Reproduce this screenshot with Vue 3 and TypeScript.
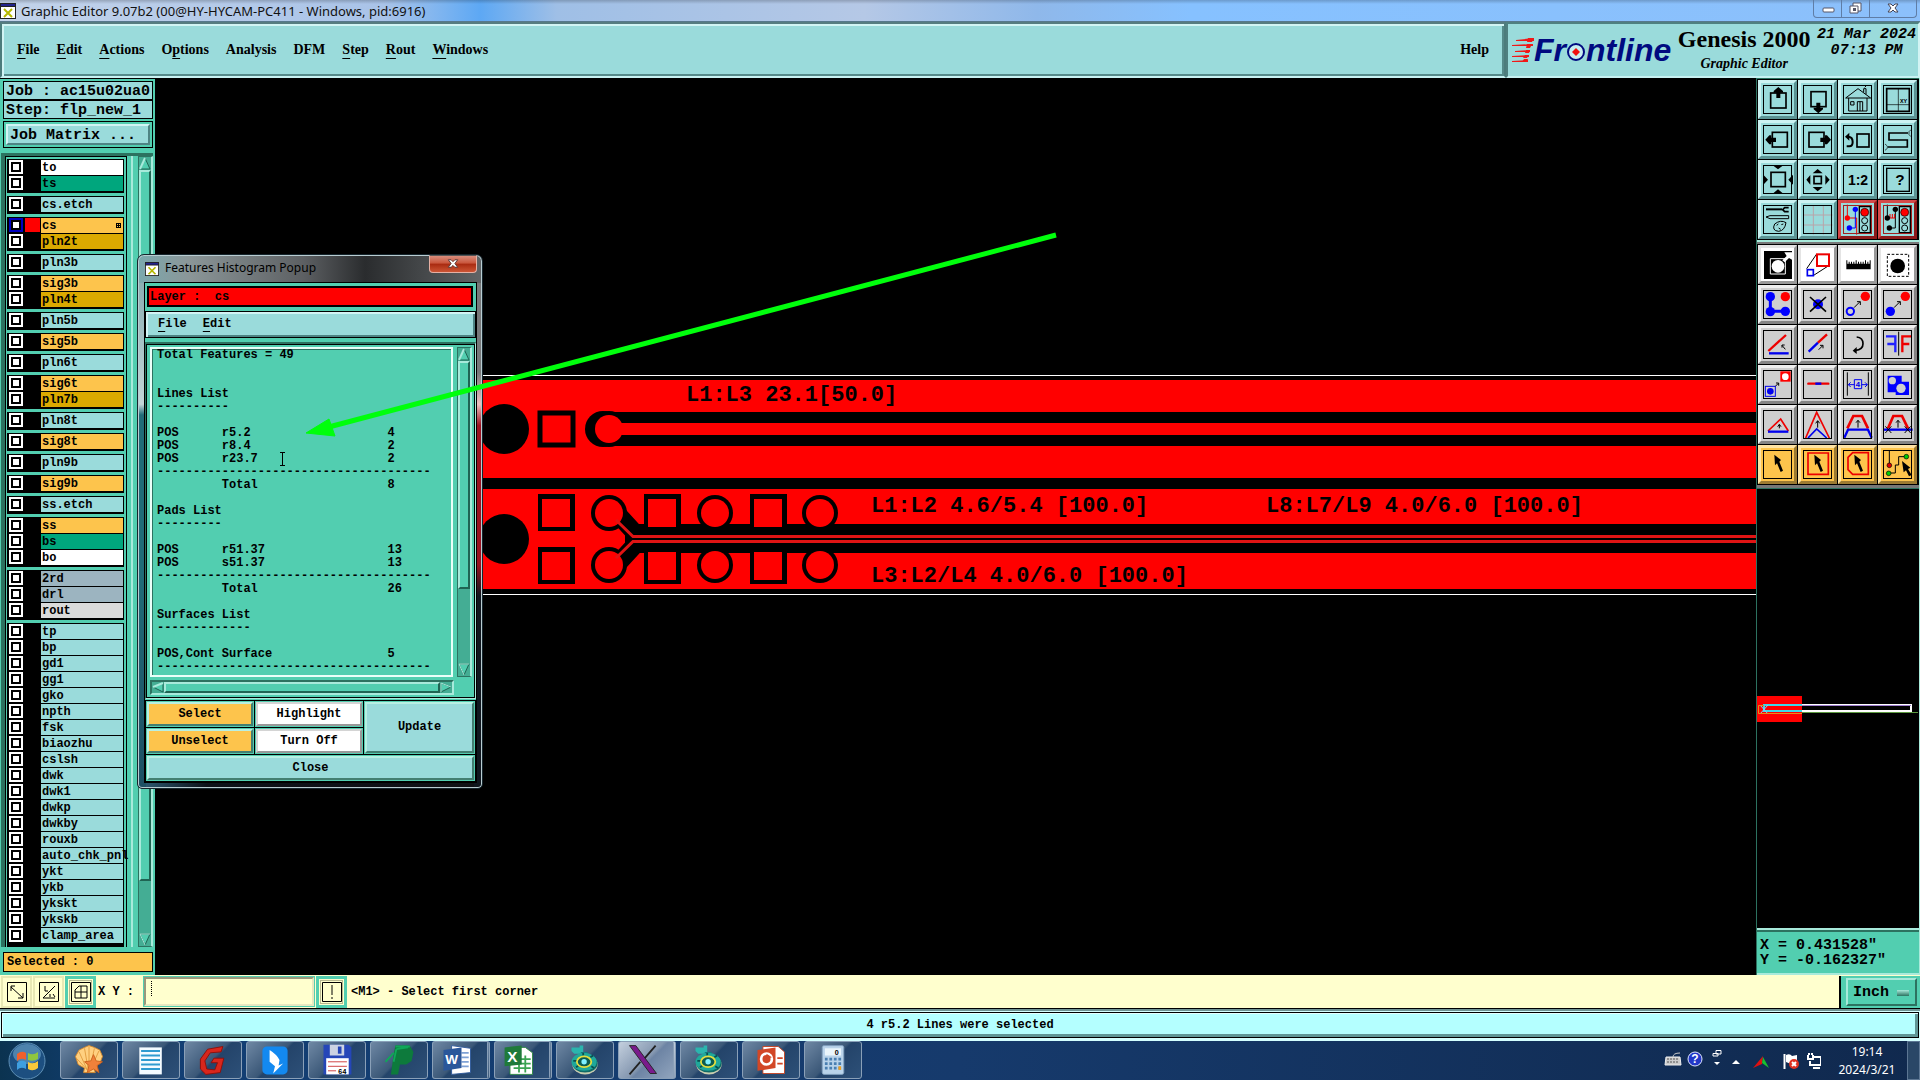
<script setup lang="ts">
interface Layer { name: string; tone: string; active?: boolean }
interface Tool { label: string; tone: string; art: string }
interface Launcher { label: string; art: string; active?: boolean; stacked?: boolean }

const menus: { label: string; key: number }[] = [
  { label: 'File', key: 0 },
  { label: 'Edit', key: 0 },
  { label: 'Actions', key: 0 },
  { label: 'Options', key: 1 },
  { label: 'Analysis', key: -1 },
  { label: 'DFM', key: -1 },
  { label: 'Step', key: 0 },
  { label: 'Rout', key: 0 },
  { label: 'Windows', key: 0 },
]

const misc = (names: string): Layer[] => names.split(' ').map((name) => ({ name, tone: 'aqua' }))

const layerGroups: Layer[][] = [
  [{ name: 'to', tone: 'white' }, { name: 'ts', tone: 'green' }],
  [{ name: 'cs.etch', tone: 'aqua' }],
  [{ name: 'cs', tone: 'amber', active: true }, { name: 'pln2t', tone: 'gold' }],
  [{ name: 'pln3b', tone: 'aqua' }],
  [{ name: 'sig3b', tone: 'amber' }, { name: 'pln4t', tone: 'gold' }],
  [{ name: 'pln5b', tone: 'aqua' }],
  [{ name: 'sig5b', tone: 'amber' }],
  [{ name: 'pln6t', tone: 'aqua' }],
  [{ name: 'sig6t', tone: 'amber' }, { name: 'pln7b', tone: 'gold' }],
  [{ name: 'pln8t', tone: 'aqua' }],
  [{ name: 'sig8t', tone: 'amber' }],
  [{ name: 'pln9b', tone: 'aqua' }],
  [{ name: 'sig9b', tone: 'amber' }],
  [{ name: 'ss.etch', tone: 'aqua' }],
  [{ name: 'ss', tone: 'amber' }, { name: 'bs', tone: 'green' }, { name: 'bo', tone: 'white' }],
  [{ name: '2rd', tone: 'slate' }, { name: 'drl', tone: 'slate' }, { name: 'rout', tone: 'silver' }],
  misc('tp bp gd1 gg1 gko npth fsk biaozhu cslsh dwk dwk1 dwkp dwkby rouxb auto_chk_pnl ykt ykb ykskt ykskb clamp_area'),
]

const rule = '-'.repeat(38)
const row = (kind: string, symbol: string, count: string): string => kind.padEnd(9) + symbol.padEnd(23) + count
const report: string[] = [
  'Total Features = 49',
  '',
  '',
  'Lines List',
  '-'.repeat(10),
  '',
  row('POS', 'r5.2', '4'),
  row('POS', 'r8.4', '2'),
  row('POS', 'r23.7', '2'),
  rule,
  row('', 'Total', '8'),
  '',
  'Pads List',
  '-'.repeat(9),
  '',
  row('POS', 'r51.37', '13'),
  row('POS', 's51.37', '13'),
  rule,
  row('', 'Total', '26'),
  '',
  'Surfaces List',
  '-'.repeat(13),
  '',
  row('POS,Cont', 'Surface', '5'),
  rule,
]

const pointer = '<path d="M49 29 69 45 64 50 75 77 68 81 57 55 51 61Z"/>'
const smallUp = '<path d="M60 68V46M54 53L60 46 66 53" fill="none" stroke="#000" stroke-width="3"/>'
const smallDiag = '<path d="M48 68L66 50M57 50H67V60" fill="none" stroke="#000" stroke-width="3"/>'

const viewTools: Tool[] = [
  { label: 'Pan up', tone: 'aqua', art: '<rect x="38" y="39" width="46" height="45" fill="none" stroke="#000" stroke-width="5"/><path d="M61 21 75 33V38H67V54H55V38H47V33Z"/>' },
  { label: 'Pan down', tone: 'aqua', art: '<rect x="39" y="35" width="45" height="45" fill="none" stroke="#000" stroke-width="5"/><path d="M61 100 75 88V83H67V68H55V83H47V88Z"/>' },
  { label: 'Home', tone: 'aqua', art: '<path d="M23 54 60 26 98 54ZM32 54V93H87V54M58 93V65H74V93M66 65V93M38 65H48V75H38ZM77 37V26H84V43M80 22L84 18" fill="none" stroke="#000" stroke-width="3"/>' },
  { label: 'Zoom XY', tone: 'aqua', art: '<path d="M26 26H94V94H26Z" fill="none" stroke="#000" stroke-width="5"/><path d="M61 26V94M26 74H94" stroke="#000" stroke-width="2"/><text x="66" y="68" font-size="18" font-weight="bold" font-family="Liberation Mono, monospace">XY</text>' },
  { label: 'Pan left', tone: 'aqua', art: '<rect x="43" y="37" width="45" height="44" fill="none" stroke="#000" stroke-width="5"/><path d="M22 59 34 46H40V53H54V66H40V73H34Z"/>' },
  { label: 'Pan right', tone: 'aqua', art: '<rect x="33" y="37" width="45" height="44" fill="none" stroke="#000" stroke-width="5"/><path d="M99 59 87 46H81V53H67V66H81V73H87Z"/>' },
  { label: 'Previous view', tone: 'aqua', art: '<rect x="57" y="42" width="36" height="39" fill="none" stroke="#000" stroke-width="5"/><path d="M26 79H34Q44 79 44 66 44 50 30 50" fill="none" stroke="#000" stroke-width="6"/><path d="M21 50 34 38V62Z"/>' },
  { label: 'Snake view', tone: 'aqua', art: '<path d="M90 39H33V60H88V81H30" fill="none" stroke="#000" stroke-width="5"/><path d="M99 29 93 35V44L99 50M21 72 28 78V85L21 91" fill="none" stroke="#000" stroke-width="2"/>' },
  { label: 'Zoom out', tone: 'aqua', art: '<rect x="39" y="37" width="43" height="43" fill="none" stroke="#000" stroke-width="5"/><path d="M44 16H76L60 28ZM44 101H76L60 88ZM16 44V74L30 59ZM105 44V74L91 59Z"/>' },
  { label: 'Zoom in', tone: 'aqua', art: '<rect x="48" y="49" width="22" height="22" fill="none" stroke="#000" stroke-width="5"/><path d="M44 40H74L59 27ZM44 81H74L59 94ZM37 45V74L25 59ZM82 45V74L95 59Z"/>' },
  { label: 'Scale', tone: 'aqua', art: '<text x="60" y="74" font-size="42" font-weight="bold" text-anchor="middle" font-family="Liberation Sans, sans-serif">1:2</text>' },
  { label: 'Help', tone: 'aqua', art: '<rect x="26" y="25" width="68" height="69" fill="none" stroke="#000" stroke-width="4"/><text x="66" y="76" font-size="46" text-anchor="middle" font-weight="bold" font-family="Liberation Sans, sans-serif">?</text>' },
  { label: 'Parameters', tone: 'aqua', art: '<path d="M24 28H72" stroke="#000" stroke-width="6"/><path d="M92 23H80L74 29 80 35H92" fill="none" stroke="#000" stroke-width="5"/><path d="M24 51 36 47H92V56H36ZM50 72Q68 58 84 68 80 92 62 94 40 92 50 72ZM56 76l5-4M70 74l6-2M62 84l6 4" fill="none" stroke="#000" stroke-width="3"/>' },
  { label: 'Grid', tone: 'aqua', art: '<path d="M46 15V104M76 15V104M15 45H104M15 75H104" stroke="#b9a4a9" stroke-width="3"/>' },
  { label: 'Net highlight', tone: 'red', art: '<path d="M28 14V54H56V104" fill="none" stroke="#e00" stroke-width="3"/><path d="M52 28V84H34" fill="none" stroke="#00f" stroke-width="3"/><circle cx="28" cy="54" r="8" fill="#f00"/><circle cx="52" cy="28" r="8" fill="#00f"/><circle cx="34" cy="84" r="8" fill="#00f"/><path d="M64 20H97V98H64Z" fill="#9adbdb" stroke="#000" stroke-width="4"/><circle cx="80" cy="37" r="12" fill="#f00" stroke="#000" stroke-width="2"/><circle cx="80" cy="62" r="9" fill="none" stroke="#000" stroke-width="3"/><circle cx="80" cy="84" r="9" fill="none" stroke="#000" stroke-width="3"/>' },
  { label: 'Net check', tone: 'red', art: '<path d="M28 14V54M52 28V84H34" fill="none" stroke="#000" stroke-width="3"/><path d="M30 54H52M36 54V42M43 54V42M50 54V42" stroke="#e00" stroke-width="3"/><circle cx="28" cy="54" r="8"/><circle cx="52" cy="28" r="8"/><circle cx="34" cy="84" r="8"/><path d="M64 20H97V98H64Z" fill="#9adbdb" stroke="#000" stroke-width="4"/><circle cx="80" cy="37" r="12" fill="#f00" stroke="#000" stroke-width="2"/><circle cx="80" cy="62" r="9" fill="none" stroke="#000" stroke-width="3"/><circle cx="80" cy="84" r="9" fill="none" stroke="#000" stroke-width="3"/>' },
]

const editTools: Tool[] = [
  { label: 'Feature info', tone: 'white', art: '<path d="M18 18H102V102H18Z"/><path d="M37 41H82V87H37Z" fill="none" stroke="#fff" stroke-width="3"/><circle cx="60" cy="64" r="19" fill="#fff"/><path d="M73 46 86 33 79 22H102V44L93 39 80 52Z" fill="#fff"/>' },
  { label: 'Copy outline', tone: 'white', art: '<path d="M26 71 56 27M47 91 92 62" stroke="#000" stroke-width="3"/><rect x="57" y="28" width="36" height="35" fill="none" stroke="#e00" stroke-width="6"/><rect x="28" y="74" width="18" height="18" fill="none" stroke="#00e" stroke-width="5"/>' },
  { label: 'Measure', tone: 'white', art: '<path d="M25 73V46H28V56H32V50H35V56H39V50H42V56H46V50H49V56H53V46H56V56H60V50H63V56H67V50H70V56H74V50H77V56H81V46H84V56H88V50H91V56H95V46H98V73Z"/>' },
  { label: 'Select area', tone: 'white', art: '<rect x="28" y="28" width="64" height="66" fill="none" stroke="#000" stroke-width="3" stroke-dasharray="8 5"/><circle cx="59" cy="63" r="22"/>' },
  { label: 'Add feature', tone: 'grey', art: '<path d="M37 35V79H82" fill="none" stroke="#00f" stroke-width="9"/><g fill="#00f"><circle cx="37" cy="35" r="14"/><circle cx="37" cy="80" r="14"/><circle cx="82" cy="79" r="14"/></g><circle cx="82" cy="35" r="14" fill="#f00"/>' },
  { label: 'Delete feature', tone: 'grey', art: '<circle cx="60" cy="58" r="15" fill="#00f"/><path d="M36 36 84 80M84 36 36 80" stroke="#000" stroke-width="5"/>' },
  { label: 'Move feature', tone: 'grey', art: `<circle cx="82" cy="34" r="14" fill="#f00"/><circle cx="37" cy="79" r="11" fill="none" stroke="#00f" stroke-width="6"/>${smallDiag}` },
  { label: 'Copy feature', tone: 'grey', art: `<circle cx="82" cy="34" r="14" fill="#f00"/><circle cx="37" cy="79" r="14" fill="#00f"/>${smallDiag}` },
  { label: 'Rotate', tone: 'grey', art: '<path d="M31 78 84 30" stroke="#e00" stroke-width="7"/><path d="M33 85H92" stroke="#00e" stroke-width="7"/><path d="M82 73 72 61M72 68V60H80" fill="none" stroke="#000" stroke-width="3"/>' },
  { label: 'Stretch', tone: 'grey', art: '<path d="M32 80 60 53" stroke="#00e" stroke-width="7"/><path d="M60 53 87 28" stroke="#e00" stroke-width="7"/><path d="M62 74 74 62M66 61H75V70" fill="none" stroke="#000" stroke-width="3"/>' },
  { label: 'Rotate free', tone: 'grey', art: '<path d="M56 36Q75 38 75 56 75 74 52 76" fill="none" stroke="#000" stroke-width="5"/><path d="M44 77 56 66V87Z"/>' },
  { label: 'Mirror', tone: 'grey', art: '<path d="M24 34H52V82M28 57H52" fill="none" stroke="#22f" stroke-width="7"/><path d="M99 34H73V82M94 57H73" fill="none" stroke="#e00" stroke-width="7"/><path d="M62 20V92" stroke="#000" stroke-width="3"/>' },
  { label: 'Substitute', tone: 'grey', art: '<rect x="22" y="64" width="30" height="30" fill="none" stroke="#00e" stroke-width="3"/><circle cx="37" cy="79" r="10" fill="#00e"/><path d="M67 19H98V50H67Z" fill="#f00"/><circle cx="82" cy="35" r="10" fill="#fff"/><path d="M52 64 61 55M54 54H62V62" fill="none" stroke="#000" stroke-width="3"/>' },
  { label: 'Break line', tone: 'grey', art: '<path d="M31 56H91" stroke="#e00" stroke-width="7" stroke-linecap="round"/><path d="M52 56H70" stroke="#00e" stroke-width="7"/>' },
  { label: 'Set spacing', tone: 'grey', art: '<path d="M28 22V92M91 22V92" stroke="#000" stroke-width="3"/><path d="M31 59H49M38 52 31 59 38 66M88 59H71M81 52 88 59 81 66M49 44H71V71H49Z" fill="none" stroke="#00e" stroke-width="3"/><text x="60" y="67" font-size="24" fill="#00e" text-anchor="middle" font-family="Liberation Mono, monospace">4</text>' },
  { label: 'Union', tone: 'grey', art: '<path d="M29 32H71V50H93V90H53V82H29Z" fill="#00f"/><circle cx="43" cy="47" r="11" fill="#cfcfcf"/><circle cx="69" cy="70" r="14" fill="#cfcfcf"/>' },
  { label: 'Corner', tone: 'grey', art: `<path d="M30 78 68 42 91 78" fill="none" stroke="#e00" stroke-width="5"/><path d="M30 80H91" stroke="#00e" stroke-width="7"/><path d="M64 70V59M59 65L64 58 69 65" fill="none" stroke="#000" stroke-width="3"/>` },
  { label: 'Spike', tone: 'grey', art: `<path d="M23 99 56 22 94 99" fill="none" stroke="#e00" stroke-width="5"/><path d="M30 99 56 72 86 99" fill="none" stroke="#00e" stroke-width="5"/><path d="M59 68V48M53 55L59 47 65 55" fill="none" stroke="#000" stroke-width="3"/>` },
  { label: 'Trapezoid', tone: 'grey', art: `<path d="M28 70 46 33H72L90 70" fill="none" stroke="#e00" stroke-width="8"/><path d="M19 98 30 74H90L101 98" fill="none" stroke="#00e" stroke-width="7"/>${smallUp}` },
  { label: 'Trapezoid cut', tone: 'grey', art: `<path d="M30 70 46 33H72L90 70" fill="none" stroke="#e00" stroke-width="8"/><path d="M16 74H104" stroke="#00e" stroke-width="7"/><path d="M22 64 40 84M40 64 22 84M80 64 98 84M98 64 80 84" stroke="#000" stroke-width="3"/>${smallUp}` },
  { label: 'Select single', tone: 'amber', art: pointer },
  { label: 'Select rectangle', tone: 'amber', art: `<path d="M30 24H91V88H30Z" fill="none" stroke="#e00" stroke-width="5"/>${pointer}` },
  { label: 'Select polygon', tone: 'amber', art: `<path d="M44 23H91V88H44L30 74V37Z" fill="none" stroke="#e00" stroke-width="5"/>${pointer}` },
  { label: 'Select net', tone: 'amber', art: '<path d="M34 18V60M34 84H52V60H62V35H84" fill="none" stroke="#000" stroke-width="3"/><circle cx="34" cy="61" r="7" fill="#d00" stroke="#000" stroke-width="2"/><circle cx="85" cy="35" r="7" fill="#0c0" stroke="#000" stroke-width="2"/><circle cx="32" cy="85" r="7" fill="#0c0" stroke="#000" stroke-width="2"/><path d="M72 48 97 68 90 72 101 90 93 94 84 76 77 82Z"/>' },
]

const disc = '<path d="M5 6H14V4H18V13H8L5 10Z" fill="#2bb5ae"/><path d="M15 11H23V15H17Z" fill="#157a80"/><ellipse cx="20" cy="25" rx="14" ry="11" fill="#c9cdb0"/><ellipse cx="20" cy="24" rx="14" ry="10" fill="#0f6a66"/><ellipse cx="19" cy="22" rx="14" ry="10" fill="#1fa89a"/><path d="M7 21H11M26 17 29 15M27 27 30 29M10 28 13 26M18 12V15" stroke="#0a4f50" stroke-width="2"/><ellipse cx="19" cy="22" rx="8" ry="6" fill="#0b5c50" stroke="#e6dd3e" stroke-width="2"/><circle cx="19" cy="22" r="3" fill="#7ff0ff"/>'

const launchers: Launcher[] = [
  { label: 'Shell', art: '<path d="M20 34H14L15 29 8 25 5 16 9 9 15 6 20 4 26 6 32 9 35 16 32 24 25 29 27 34Z" fill="#ffd080" stroke="#d98a2b"/><path d="M18 31 9 11M19 30 15 7M20 30 20 5M21 30 26 7M18 31 6 18M22 30 31 10" stroke="#e09a3c" fill="none"/><path d="M25 14 28 21 35 22 29 26 31 34 25 30 18 34 20 26 15 22 22 21Z" fill="#f0813a" stroke="#c9601c"/>' },
  { label: 'Notes', art: '<rect x="7" y="6" width="25" height="30" fill="#f4fbff"/><path d="M9 10H30M9 15H30M9 20H30M9 25H30M9 30H30" stroke="#2f9bd0" stroke-width="2"/>' },
  { label: 'Genesis', art: '<path d="M31 5 29 11 17 12 11 21 13 30 22 31 25 23H18L21 18H32L28 34 12 36 6 30 6 19 14 8Z" fill="#d8261c" stroke="#8e0d08"/>' },
  { label: 'Messenger', art: '<rect x="6" y="5" width="28" height="31" rx="5" fill="#1389f0"/><path d="M14 9Q22 14 25 20L24 26 29 24 18 35 20 27 14 22Z" fill="#fff"/>' },
  { label: 'Disk', art: '<path d="M5 3H33L36 6V36H5Z" fill="#2546b8"/><rect x="12" y="3" width="16" height="12" fill="#ccd3e2"/><rect x="21" y="5" width="4" height="8" fill="#2546b8"/><rect x="8" y="18" width="25" height="18" fill="#fff"/><path d="M10 22H31M10 27H31M10 32H19" stroke="#c33"/><text x="21" y="35" font-size="8" font-family="Liberation Mono, monospace">64</text>' },
  { label: 'Player', art: '<path d="M16 4H32L36 11 34 21 28 25H21L19 36H11L14 14Z" fill="#0d7a3c"/><path d="M16 5H32M17 8 14 22M17 8 30 6M5 22 14 12" stroke="#0fa858" fill="none" stroke-width="2"/>' },
  { label: 'Word', stacked: true, art: '<path d="M14 4 35 7V34L14 36Z" fill="#fff" stroke="#2b579a"/><path d="M25 12H33M25 17H33M25 22H33M25 27H33" stroke="#7fa2d6" stroke-width="2"/><path d="M5 9 25 6V29L5 32Z" fill="#2b579a"/><text x="7" y="24" font-size="15" font-weight="bold" fill="#fff" font-family="Liberation Sans, sans-serif">W</text>' },
  { label: 'Excel', stacked: true, art: '<path d="M10 6H27L35 12V36H10Z" fill="#fff" stroke="#2b8a3e"/><path d="M14 19H33M14 24H33M14 29H33M20 15V34M27 15V34" stroke="#3aa352" stroke-width="2"/><path d="M4 6 23 4V25L4 27Z" fill="#1f7a3a"/><text x="7" y="22" font-size="17" font-weight="bold" fill="#fff" font-family="Liberation Sans, sans-serif">X</text>' },
  { label: 'Disc tool', art: disc },
  { label: 'X server', active: true, stacked: true, art: '<path d="M5 4H12L35 35H28Z" fill="#7a1b8c" stroke="#222"/><path d="M34 4 22 18M17 22 5 36" stroke="#222" stroke-width="2"/>' },
  { label: 'Disc tool 2', art: disc },
  { label: 'PowerPoint', art: '<path d="M11 5H28L35 11V35H11Z" fill="#fff" stroke="#c8421f"/><path d="M5 9 25 6V29L5 32Z" fill="#d24726"/><circle cx="15" cy="19" r="6" fill="none" stroke="#fff" stroke-width="3"/><path d="M15 19V13L21 17Z" fill="#d24726"/><path d="M27 18H33M27 24H33" stroke="#d24726" stroke-width="2"/>' },
  { label: 'Calculator', art: '<rect x="8" y="4" width="24" height="32" rx="2" fill="#b9d3ea" stroke="#7d9cba"/><rect x="11" y="7" width="18" height="8" fill="#eaf5fb"/><text x="22" y="14" font-size="8" font-family="Liberation Sans, sans-serif">0</text><path d="M11 19H29M11 24H29M11 29H29" stroke="#4a7fb0" stroke-width="3" stroke-dasharray="3 2"/><path d="M26 29H29" stroke="#f0a020" stroke-width="4"/>' },
]

// Square and round test pads along the differential pair coupon.
const squareX = [538, 644, 750]
const roundX = [609, 715, 820]
const padRows = [494, 547]
</script>

<template>
  <div class="screen">
    <header class="title-bar">
      <svg class="app-icon" viewBox="0 0 16 16"><path d="M0 0H16V16H0Z" fill="#222" /><path d="M1 4H15V15H1Z" fill="#fff" /><path d="M1 1H15V3H1Z" fill="#23238c" /><path d="M4 6 12 14M12 6 4 14" stroke="#b5b800" stroke-width="2" /></svg>
      <h1>Graphic Editor 9.07b2 (00@HY-HYCAM-PC411 - Windows, pid:6916)</h1>
      <div class="caption-buttons">
        <button type="button" aria-label="Minimize"><svg viewBox="0 0 28 17"><rect x="9" y="8" width="11" height="4" rx="1" fill="#fff" stroke="#556" /></svg></button>
        <button type="button" aria-label="Restore"><svg viewBox="0 0 28 17"><path d="M11 3H19V11H11Z" fill="#fff" stroke="#556" /><path d="M8 6H16V13H8Z" fill="#fff" stroke="#556" /><path d="M11 8H14V11H11Z" fill="#556" /></svg></button>
        <button type="button" class="wide" aria-label="Close"><svg viewBox="0 0 28 17"><path d="M9 4H12L14 6 16 4H19L16 8 19 12H16L14 10 12 12H9L12 8Z" fill="#fff" stroke="#445" /></svg></button>
      </div>
    </header>

    <div class="top">
      <nav class="menu-bar">
        <button v-for="m in menus" :key="m.label" type="button"><template v-if="m.key >= 0">{{ m.label.slice(0, m.key) }}<u>{{ m.label[m.key] }}</u>{{ m.label.slice(m.key + 1) }}</template><template v-else>{{ m.label }}</template></button>
        <button type="button" class="help">Help</button>
      </nav>
      <section class="brand">
        <div class="logo">
          <svg class="speed" viewBox="0 0 22 24"><path d="M4 2 22 0V3L4 3ZM0 7 21 6V8H0ZM3 13 18 12V14H3ZM0 18 17 17V19H0ZM0 23 16 22V24H0Z" fill="#f01818" /><path d="M16 0H22L20 4H15ZM15 6H20L18 10H14ZM14 12H18L17 15H13ZM13 17H17L15 20H11ZM12 21H16L15 24H10Z" fill="#f01818" /></svg>
          <span>Fr</span>
          <svg class="target" viewBox="0 0 20 20"><circle cx="10" cy="10" r="8" fill="#c8eef0" stroke="#000a80" stroke-width="2" /><path d="M10 6 14 10 10 14 6 10Z" fill="#f01010" /></svg>
          <span>ntline</span>
        </div>
        <div class="product"><strong>Genesis 2000</strong><em>Graphic Editor</em></div>
        <div class="clock"><span>21 Mar 2024</span><span>07:13 PM</span></div>
      </section>
    </div>

    <main class="workspace">
      <aside class="layers">
        <div class="job"><span>Job : ac15u02ua0</span><span>Step: flp_new_1</span></div>
        <div class="matrix"><button type="button">Job Matrix ...</button></div>
        <div class="layer-pane">
          <div class="layer-scroll">
            <div v-for="(group, g) in layerGroups" :key="g" class="layer-group">
              <label v-for="l in group" :key="l.name" class="layer" :class="{ active: l.active }">
                <input type="checkbox">
                <i class="swatch"></i>
                <span class="name" :class="l.tone">{{ l.name }}<i v-if="l.active" class="mark"></i></span>
              </label>
            </div>
          </div>
          <div class="scrollbar">
            <svg class="arrow" viewBox="0 0 12 13"><path d="M6 1 11 12H1L6 1" fill="#52ceb0" stroke="#1f6453" /><path d="M1 12 6 1" stroke="#a8eadb" stroke-width="2" /></svg>
            <i class="thumb"></i><i class="trough"></i>
            <svg class="arrow" viewBox="0 0 12 13"><path d="M1 1H11L6 12Z" fill="#52ceb0" stroke="#1f6453" /><path d="M6 12 1 1H11" fill="none" stroke="#a8eadb" /></svg>
          </div>
        </div>
        <div class="selected">Selected : 0</div>
      </aside>

      <section class="canvas">
        <svg class="board" viewBox="155 78 1601 897" preserveAspectRatio="xMinYMin slice">
          <path d="M155 375.500H1756M155 594.500H1756" stroke="#fff" />
          <g fill="#f00">
            <rect x="483" y="380" width="1273" height="98" />
            <rect x="483" y="489" width="1273" height="100" />
          </g>
          <circle cx="504" cy="429" r="25" />
          <circle cx="504" cy="539" r="25" />
          <rect x="540" y="413" width="33" height="32" fill="none" stroke="#000" stroke-width="5" />
          <circle cx="603" cy="429" r="18" />
          <circle cx="609" cy="429" r="18" />
          <rect x="609" y="412" width="1147" height="34" />
          <circle cx="609" cy="429" r="14" fill="#f00" />
          <rect x="609" y="423" width="1147" height="12" fill="#f00" />

          <path d="M638 524H1756V553H638L626 539Z" />
          <path d="M613 509 634 532V546L613 569" fill="none" stroke="#000" stroke-width="18" />
          <template v-for="(y, r) in padRows" :key="y">
            <template v-for="x in squareX" :key="x">
              <rect :x="x" :y="y" width="37" height="37" />
              <rect :x="x + 4" :y="y + 5" width="28" height="28" fill="#f00" />
            </template>
            <template v-for="x in roundX" :key="x">
              <circle :cx="x" :cy="r === 0 ? 513 : 565" r="18" />
              <circle :cx="x" :cy="r === 0 ? 513 : 565" r="14" fill="#f00" />
            </template>
          </template>
          <path d="M616 520 633 536.500H1756M616 558 633 541.500H1756" fill="none" stroke="#e01414" stroke-width="3" />
          <g class="legend">
            <text x="686" y="401">L1:L3 23.1[50.0]</text>
            <text x="871" y="512">L1:L2 4.6/5.4 [100.0]</text>
            <text x="1266" y="512">L8:L7/L9 4.0/6.0 [100.0]</text>
            <text x="871" y="582">L3:L2/L4 4.0/6.0 [100.0]</text>
          </g>
        </svg>
      </section>

      <aside class="tools">
        <div class="tool-grid view">
          <button v-for="t in viewTools" :key="t.label" type="button" class="tool" :class="t.tone" :aria-label="t.label"><svg viewBox="0 0 120 120" v-html="t.art"></svg></button>
        </div>
        <div class="tool-grid edit">
          <button v-for="t in editTools" :key="t.label" type="button" class="tool" :class="t.tone" :aria-label="t.label"><svg viewBox="0 0 120 120" v-html="t.art"></svg></button>
        </div>
        <div class="overview">
          <svg viewBox="1757 489 162 430" preserveAspectRatio="xMinYMin meet">
            <rect x="1757" y="696" width="45" height="26" fill="#f00" />
            <path d="M1802 705H1911V711H1802" fill="none" stroke="#fff" stroke-width="2" />
            <path d="M1802 705.500H1911" stroke="#a080d0" />
            <path d="M1802 712.500H1918" stroke="#5c9a40" />
            <path d="M1802 705H1764V711H1802" fill="none" stroke="#3cd8e8" stroke-width="2" />
            <path d="M1760 705 1768 714M1768 705 1760 714" stroke="#8cf" />
            <path d="M1764 705.500H1758.500V713.500H1802" fill="none" stroke="#e0901c" />
          </svg>
        </div>
        <div class="coords"><span>X = 0.431528"</span><span>Y = -0.162327"</span></div>
      </aside>

      <section class="popup">
        <header class="popup-title">
          <svg class="app-icon" viewBox="0 0 16 16"><path d="M0 0H16V16H0Z" fill="#222" /><path d="M1 4H15V15H1Z" fill="#fff" /><path d="M1 1H15V3H1Z" fill="#23238c" /><path d="M4 6 12 14M12 6 4 14" stroke="#b5b800" stroke-width="2" /></svg>
          <h2>Features Histogram Popup</h2>
          <button type="button" aria-label="Close popup"><svg viewBox="0 0 28 17"><path d="M9 4H12L14 6 16 4H19L16 8 19 12H16L14 10 12 12H9L12 8Z" fill="#fff" stroke="#533" /></svg></button>
        </header>
        <div class="popup-body">
          <div class="layer-line">Layer :&nbsp; cs</div>
          <nav class="popup-menu"><button type="button"><u>F</u>ile</button><button type="button"><u>E</u>dit</button></nav>
          <div class="report-frame">
            <div class="report-row">
              <pre class="report">{{ report.join('\n') }}</pre>
              <div class="scrollbar short">
                <svg class="arrow" viewBox="0 0 12 13"><path d="M6 1 11 12H1L6 1" fill="#52ceb0" stroke="#1f6453" /><path d="M1 12 6 1" stroke="#a8eadb" stroke-width="2" /></svg>
                <i class="thumb"></i><i class="trough"></i>
                <svg class="arrow" viewBox="0 0 12 13"><path d="M1 1H11L6 12Z" fill="#52ceb0" stroke="#1f6453" /><path d="M6 12 1 1H11" fill="none" stroke="#a8eadb" /></svg>
              </div>
            </div>
            <div class="hbar">
              <svg class="arrow" viewBox="0 0 12 11"><path d="M11 10 1 5 11 1Z" fill="#52ceb0" stroke="#1f6453" /><path d="M1 5 11 1" stroke="#a8eadb" stroke-width="2" /></svg>
              <i class="thumb"></i>
              <svg class="arrow" viewBox="0 0 12 11"><path d="M1 1 11 5 1 10Z" fill="#52ceb0" stroke="#1f6453" /><path d="M1 10V1L11 5" fill="none" stroke="#a8eadb" /></svg>
            </div>
          </div>
          <div class="actions">
            <div class="cell"><button type="button" class="amber">Select</button></div>
            <div class="cell"><button type="button" class="white">Highlight</button></div>
            <div class="cell tall"><button type="button" class="aqua">Update</button></div>
            <div class="cell"><button type="button" class="amber">Unselect</button></div>
            <div class="cell"><button type="button" class="white">Turn Off</button></div>
            <div class="cell full"><button type="button" class="aqua">Close</button></div>
          </div>
        </div>
      </section>

      <svg class="pointer-arrow" viewBox="300 228 760 216">
        <path d="M1056 235 325 428" stroke="#00ff0c" stroke-width="5" />
        <path d="M306 433 329 419 335 436Z" fill="#00ff0c" stroke="#00ff0c" />
      </svg>
      <svg class="caret" viewBox="0 0 7 14"><path d="M1 .5H6M3.500 1V13M1 13.500H6" stroke="#000" /></svg>
    </main>

    <footer class="command">
      <button type="button" class="mode" aria-label="Absolute"><svg viewBox="0 0 20 20"><path d="M.5 .5H19.500V19.500H.5ZM4 5 16 16M4 9V4H8M16 11V16H11" fill="none" stroke="#000" /></svg></button>
      <button type="button" class="mode" aria-label="Angle"><svg viewBox="0 0 20 20"><path d="M.5 .5H19.500V19.500H.5ZM16 4 4 16H16M6 4V9H9M11 12V15M14 12L16 15" fill="none" stroke="#000" /></svg></button>
      <button type="button" class="mode on" aria-label="Snap grid"><svg viewBox="0 0 20 20"><path d="M.5 .5H19.500V19.500H.5ZM8 4H16V16H4V8ZM10 4V16M4 10H16" fill="none" stroke="#000" /></svg></button>
      <label class="xy" for="xy">X Y :</label>
      <input id="xy" type="text">
      <button type="button" class="mode on" aria-label="Execute"><svg viewBox="0 0 20 20"><path d="M.5 .5H19.500V19.500H.5ZM10 3V13M10 15V17" fill="none" stroke="#000" /></svg></button>
      <span class="prompt">&lt;M1&gt; - Select first corner</span>
      <div class="units">
        <select aria-label="Units"><option>Inch</option></select>
      </div>
    </footer>

    <div class="status"><span>4 r5.2 Lines were selected</span></div>

    <footer class="taskbar">
      <button type="button" class="start" aria-label="Start">
        <svg viewBox="0 0 38 38"><circle cx="19" cy="19" r="18" fill="#1d4f80" stroke="#5d8fb5" /><ellipse cx="19" cy="12" rx="14" ry="10" fill="#6fa6cc" opacity=".6" /><path d="M9 12Q14 8 18 11V18Q13 15 9 19Z" fill="#f0602c" /><path d="M20 11Q25 14 30 10V17Q25 20 20 18Z" fill="#8fc63e" /><path d="M9 21Q13 17 18 20V27Q13 24 9 28Z" fill="#3f9fe0" /><path d="M20 20Q25 23 30 19V26Q25 30 20 27Z" fill="#fbc93a" /></svg>
      </button>
      <div class="launchers">
        <button v-for="a in launchers" :key="a.label" type="button" :class="{ active: a.active, stacked: a.stacked }" :aria-label="a.label"><svg viewBox="0 0 40 40" v-html="a.art"></svg></button>
      </div>
      <div class="tray">
        <svg class="tray-icons" viewBox="0 0 160 30">
          <path d="M5 12H19L20 20H4Z" fill="#ccc" stroke="#eee" /><path d="M6 14H18M6 17H18" stroke="#555" stroke-dasharray="2 1" /><path d="M12 12Q12 8 19 8" fill="none" stroke="#ccc" />
          <circle cx="34" cy="14" r="7" fill="#2338c8" stroke="#dfe6ff" /><text x="34" y="18" font-size="12" font-weight="bold" fill="#fff" text-anchor="middle" font-family="Liberation Sans, sans-serif">?</text>
          <path d="M55 5.500H60V9H55ZM52 8.500H57V11H52Z" fill="none" stroke="#fff" /><path d="M53 17H59L56 20Z" fill="#fff" />
          <path d="M71 19H79L75 15Z" fill="#fff" />
          <path d="M92 23 102 11 101 19Z" fill="#e01010" /><path d="M102 12 108 23 101 18Z" fill="#18c030" />
          <path d="M123.500 9V24" stroke="#fff" stroke-width="2" /><path d="M125 10Q129 8 131 11L136 10V18Q130 20 125 17Z" fill="#fff" /><circle cx="133" cy="19" r="5" fill="#e03020" /><path d="M131 17 135 21M135 17 131 21" stroke="#fff" stroke-width="2" />
          <path d="M151 12H160V20H149V16M152 23H159M147 10V14H152V10M148 8V10M151 8V10" fill="none" stroke="#fff" stroke-width="2" />
        </svg>
        <div class="time"><span>19:14</span><span>2024/3/21</span></div>
        <button type="button" class="peek" aria-label="Show desktop"></button>
      </div>
    </footer>
  </div>
</template>

<style>
html,
body {
  margin: 0;
  background: #000;
}
</style>

<style scoped>
.screen {
  --teal: #52ceb0;
  --aqua: #9adbdb;
  --amber: #fdc44c;
  --mono: "Liberation Mono", "DejaVu Sans Mono", monospace;
  --caption: "Noto Sans", "Open Sans", sans-serif;
  display: flex;
  flex-direction: column;
  height: 100vh;
  min-height: 1000px;
  overflow: hidden;
  color: #000;
  font: bold 12px/13px var(--mono);
}
* { box-sizing: border-box; }
button, input, select {
  margin: 0;
  padding: 0;
  border: 0;
  border-radius: 0;
  background: none;
  color: inherit;
  font: inherit;
}
h1, h2, pre { margin: 0; }
svg { display: block; }

/* window title */
.title-bar {
  display: flex;
  align-items: flex-start;
  flex: none;
  height: 22px;
  background: linear-gradient(#0003, #0000 4px), linear-gradient(90deg, #c3d3ea, #a9c3e8 20%, #7db4f0 23%, #5da8f4 25%, #9fbfe6 29%, #b5c8e6 45%, #8fb8ea 54%, #86c1ff 62%, #8cc0fb);
  border-bottom: 1px solid #57788c;
}
.title-bar .app-icon { width: 16px; height: 16px; margin-top: 3px; }
.title-bar h1 {
  flex: 1;
  padding-left: 5px;
  font: 13px/22px var(--caption);
  color: #111;
}
.caption-buttons {
  display: flex;
  margin-right: 3px;
  border: 1px solid #5f7da6;
  border-top: 0;
  border-radius: 0 0 4px 4px;
}
.caption-buttons button { width: 28px; height: 17px; border-right: 1px solid #5f7da6; }
.caption-buttons .wide { width: 46px; border-right: 0; }
.caption-buttons svg { width: 28px; height: 17px; margin: 0 auto; }

/* menu and branding */
.top { display: flex; flex: none; height: 56px; }
.menu-bar {
  display: flex;
  align-items: center;
  flex: 1;
  gap: 17px;
  padding: 0 15px;
  background: var(--aqua);
  border: 2px solid #4c7c7c;
  border-top-color: #567c80;
  border-bottom: 2px solid #c8f2f2;
  box-shadow: inset 2px 2px #d2f4f4, inset -2px -2px #558a8a;
  font: bold 14px/18px "Liberation Serif", serif;
}
.menu-bar .help { margin-left: auto; }
u { text-underline-offset: 4px; text-decoration-thickness: 1px; }
.brand {
  display: flex;
  flex: none;
  padding: 2px 2px 0 4px;
  background: var(--aqua);
  border: 2px solid #4f8080;
  border-right-color: #d2f4f4;
  border-bottom-color: #c8f2f2;
  width: 414px;
}
.logo { display: flex; align-items: center; height: 48px; font: italic bold 32px/32px "Liberation Sans", sans-serif; color: #000a80; }
.speed { width: 22px; height: 24px; }
.target { width: 20px; height: 20px; margin-top: 3px; }
.product { display: flex; flex-direction: column; align-items: center; flex: 1; font-family: "Liberation Serif", serif; }
.product strong { font-size: 24px; line-height: 26px; white-space: nowrap; }
.product em { font-size: 14px; line-height: 24px; }
.clock { display: flex; flex-direction: column; align-items: center; padding-top: 1px; font: italic bold 15px/16px var(--mono); white-space: pre; }

/* main area */
.workspace { position: relative; display: flex; flex: 1; min-height: 0; background: #000; }
.layers {
  display: flex;
  flex-direction: column;
  flex: none;
  width: 155px;
  padding: 2px 2px 3px 3px;
  background: var(--teal);
  border-top: 1px solid #000;
  font-size: 15px;
}
.job { display: flex; flex-direction: column; flex: none; }
.job span {
  height: 19px;
  padding-left: 2px;
  border: 1px solid #000;
  background: var(--aqua);
  line-height: 19px;
  white-space: nowrap;
  overflow: hidden;
}
.matrix { flex: none; height: 27px; margin-top: 2px; padding: 2px; border: 1px solid #000; }
.matrix button {
  width: 100%;
  height: 21px;
  padding-left: 2px;
  background: var(--aqua);
  border: 2px solid;
  border-color: #d2f4f4 #4e8484 #4e8484 #d2f4f4;
  text-align: left;
  line-height: 19px;
}
.layer-pane {
  display: flex;
  justify-content: space-between;
  flex: 1;
  min-height: 0;
  margin: 5px 0 5px -2px;
  border-top: 3px solid #2c7260;
  border-left: 4px solid #2c7260;
}
.layer-scroll {
  width: 122px;
  overflow-x: visible;
  overflow-y: clip;
  padding-top: 2px;
  border: 1px solid #000;
  border-bottom: 0;
  box-shadow: 4px 0 var(--teal), 6px 0 #a8eadb;
}
.layer-group { margin-bottom: 3px; padding: 1px; background: #000; margin-right: 2px; margin-left: 1px; }
.layer-group:last-child { padding-bottom: 20px; }
.layer { display: flex; height: 16px; font-size: 12px; line-height: 16px; }
.layer input {
  appearance: none;
  flex: none;
  width: 14px;
  height: 14px;
  margin: 0 2px 2px 1px;
  border: 2px solid #fff;
  background: #fff;
  box-shadow: inset 0 0 0 2px #000;
}
.layer.active input { border-color: #0000c0; }
.swatch { flex: none; width: 15px; height: 14px; margin-right: 1px; }
.active .swatch { background: #f00; }
.name { position: relative; flex: 1; min-width: 0; height: 15px; padding-left: 1px; white-space: nowrap; }
.mark {
  position: absolute;
  right: 2px;
  top: 5px;
  width: 5px;
  height: 5px;
  border: 1px solid #000;
  background: linear-gradient(#000, #000) center/1px 5px no-repeat, linear-gradient(#000, #000) center/5px 1px no-repeat;
}
.white { background: #fff; }
.green { background: #00a67d; }
.aqua { background: var(--aqua); }
.amber { background: var(--amber); }
.gold { background: #dba900; }
.slate { background: #9cb4c0; }
.silver { background: #dadada; }

.scrollbar {
  display: flex;
  flex-direction: column;
  flex: none;
  width: 15px;
  background: #44ad94;
  border: 1px solid #2c7260;
  border-right: 2px solid #a8eadb;
}
.thumb { flex: 714; background: var(--teal); border: 2px solid; border-color: #a8eadb #1f6453 #1f6453 #a8eadb; }
.trough { flex: 53; }
.arrow { flex: none; width: 12px; height: 13px; }
.selected {
  flex: none;
  height: 20px;
  padding-left: 3px;
  border: 1px solid #000;
  background: var(--amber);
  font-size: 12px;
  line-height: 18px;
}

.canvas { flex: 1; min-width: 0; background: #000; }
.board { width: 100%; height: 100%; }
.legend { font: bold 22px var(--mono); fill: #000; }

/* tool column */
.tools { display: flex; flex-direction: column; flex: none; width: 164px; background: #000; border-left: 1px solid #2c7260; border-right: 1px solid #a8eadb; }
.tool-grid { display: grid; grid-template-columns: repeat(4, 40px); padding: 1px; border-top: 1px solid #2c7260; }
.view { border-bottom: 2px solid #a8eadb; padding-bottom: 0; }
.edit { border-bottom: 3px solid #777; padding-bottom: 0; border-top: 2px solid #777; }
.tool {
  position: relative;
  width: 39px;
  height: 39px;
  margin-bottom: 1px;
  border: 3px solid;
}
.tool svg { width: 40px; height: 40px; margin: -3px; }
.tool::after { content: ""; position: absolute; inset: 2px; border: 1px solid #000; }
.tool.aqua { border-color: #ccf2f2 #5b9494 #5b9494 #ccf2f2; }
.tool.red { background: var(--aqua); border-color: #d64a4a #8e1a1a #8e1a1a #d64a4a; }
.tool.red::after { border-color: #a02020; }
.tool.white { border-color: #e4e4e4 #999 #999 #e4e4e4; }
.tool.white::after { border: 0; }
.tool.grey { background: #cfcfcf; border-color: #efefef #848484 #848484 #efefef; }
.tool.amber { border-color: #ffe3a4 #9c7a32 #9c7a32 #ffe3a4; }
.overview { flex: 1; min-height: 0; border-top: 1px solid #2c7260; }
.overview svg { width: 100%; height: 100%; }
.coords {
  display: flex;
  flex-direction: column;
  flex: none;
  height: 45px;
  padding: 6px 3px 0;
  background: var(--teal);
  border-top: 2px solid #2c7260;
  box-shadow: 0 -2px #a8eadb;
  border-bottom: 2px solid #a8eadb;
  font-size: 15px;
  line-height: 15px;
  white-space: nowrap;
}

/* histogram popup */
.popup {
  position: absolute;
  left: 137px;
  top: 176px;
  width: 346px;
  padding: 0 5px 5px 6px;
  border: 1px solid #16252c;
  border-radius: 7px 7px 5px 5px;
  box-shadow: inset 0 0 0 1px #b9cdd2;
  background: linear-gradient(90deg, #7ba9ae, #8b9698 15%, #5d6063 48%, #2a2c2e 66%, #606466) top/100% 28px no-repeat, linear-gradient(#7fa6aa, #c3d6d8 28%, #216c78 30% 60%, #1d4f63) left/8px 100% no-repeat, linear-gradient(#77797a 0 22%, #f0c0c0 28%, #9a1220 32% 58%, #10171f 64%) right/8px 100% no-repeat, linear-gradient(90deg, #2f5f78, #0c1118 20%, #101216);
}
.popup-title { display: flex; align-items: flex-start; height: 27px; }
.popup-title .app-icon { width: 16px; height: 14px; margin-top: 7px; }
.popup-title h2 { flex: 1; padding-left: 5px; font: 12px/26px var(--caption); }
.popup-title button { width: 48px; height: 18px; border: 1px solid #e6b0a4; border-top-color: #555; border-radius: 0 0 4px 4px; background: linear-gradient(#d98d7c, #c9553b 45%, #a82a10 50%, #cc5535); }
.popup-title svg { width: 28px; height: 16px; margin: 0 auto; }
.popup-body { padding: 3px 0 0; background: var(--teal); border: 1px solid #000; }
.layer-line { height: 21px; margin: 0 3px 0 2px; padding-left: 1px; border: 2px solid #000; background: #f00; line-height: 18px; }
.popup-menu {
  display: flex;
  gap: 16px;
  height: 27px;
  margin-top: 4px;
  padding-left: 12px;
  background: var(--aqua);
  border: 1px solid #000;
  box-shadow: inset 2px 2px #d2f4f4, inset -2px -2px #4e8484;
}
.report-frame { margin-top: 4px; padding: 3px 3px 3px 4px; border: 1px solid #a8eadb; border-top: 2px solid #2c7260; border-left: 1px solid #2c7260; box-shadow: inset 0 0 0 1px #000; }
.report-row { display: flex; gap: 4px; height: 330px; }
.report {
  flex: 1;
  overflow: hidden;
  padding: 0 0 0 5px;
  border: 2px solid #eafff9;
  box-shadow: inset 1px 1px #2c7260;
  font: bold 12px/13px var(--mono);
}
.short .thumb { flex: 243; }
.short .trough { flex: 80; }
.hbar { display: flex; width: 304px; height: 15px; margin-top: 3px; border: 2px solid #2c7260; border-right-color: #a8eadb; border-bottom-color: #a8eadb; background: #44ad94; }
.hbar .thumb { flex: 1; }
.hbar .arrow { height: 11px; }
.actions { display: grid; grid-template-columns: 109px 109px 1fr; grid-template-rows: 27px 27px 27px; background: #000; margin-top: 1px; border-top: 1px solid #000; border-left: 1px solid #000; }
.cell { display: flex; padding: 1px; border-right: 1px solid #000; border-bottom: 1px solid #000; background: var(--teal); }
.cell button { flex: 1; border: 2px solid; border-color: #b8efe2 #447f72 #447f72 #b8efe2; }
.cell .white { border-color: #d4d4d4 #999 #999 #d4d4d4; }
.tall { grid-column: 3; grid-row: 1 / 3; }
.full { grid-column: 1 / 4; }

.pointer-arrow { position: absolute; left: 300px; top: 150px; width: 760px; height: 216px; pointer-events: none; }
.caret { position: absolute; left: 279px; top: 374px; width: 7px; height: 14px; }

/* command line */
.command {
  display: flex;
  flex: none;
  height: 34px;
  padding-top: 1px;
  border-bottom: 1px solid #000;
  background: #ffffce;
}
.mode { flex: none; width: 31px; height: 32px; margin-right: 1px; padding: 4px; border: 2px solid #e8e8b4; }
.mode:first-child { margin-left: 1px; }
.mode svg { width: 20px; height: 20px; }
.mode.on { border: 3px solid var(--teal); padding: 3px; outline: 1px solid #b8b890; outline-offset: -5px; }
.xy { width: 46px; padding-left: 1px; line-height: 33px; white-space: nowrap; }
#xy {
  width: 172px;
  height: 31px;
  margin-right: 1px;
  padding: 0 6px;
  border: 3px solid;
  border-color: #98987c #e8e8c0 #e8e8c0 #98987c;
  outline: 1px solid var(--teal);
  outline-offset: -1px;
  background: repeating-linear-gradient(#000 0 1px, #0000 1px 2px) 5px 2px/1px 15px no-repeat;
}
.prompt { flex: 1; padding-left: 3px; line-height: 33px; }
.units { width: 81px; padding: 2px 3px 2px 5px; border-left: 2px solid #000; background: var(--teal); }
.units select {
  appearance: none;
  width: 71px;
  height: 28px;
  padding-left: 5px;
  border: 2px solid;
  border-color: #a8eadb #2c7260 #2c7260 #a8eadb;
  background: linear-gradient(#a8eadb, #2c7260) 49px 10px/12px 6px no-repeat, var(--teal);
  font-size: 15px;
}

/* status */
.status {
  flex: none;
  height: 32px;
  padding: 1px 1px 3px;
  background: #d4ffff;
  border-top: 2px solid #6f9494;
}
.status span {
  display: block;
  height: 26px;
  background: #b4ffff;
  border: 1px solid #000;
  box-shadow: inset 1px 1px #e4ffff, inset -3px -3px #5f9696;
  text-align: center;
  line-height: 24px;
}

/* taskbar */
.taskbar { display: flex; flex: none; height: 39px; background: linear-gradient(90deg, #0b3350, #123f74 6%, #163a6c 50%, #10294e); }
.start { width: 60px; height: 39px; padding-left: 8px; }
.start svg { width: 38px; height: 38px; }
.launchers { display: flex; flex: 1; gap: 4px; }
.launchers button {
  width: 58px;
  height: 38px;
  border: 1px solid #8aa0b8;
  border-radius: 3px;
  background: linear-gradient(135deg, #6f88a4, #3b5878 48%, #24446a 52%, #2d5078);
}
.launchers .active { background: linear-gradient(135deg, #c4d0de, #8497b0 50%, #6d84a4 55%, #90a4bd); }
.launchers .stacked { padding-right: 6px; border-right: 3px double #8aa0b8; }
.launchers svg { width: 36px; height: 36px; margin: 0 auto; }
.tray { display: flex; color: #fff; }
.tray-icons { width: 160px; height: 30px; margin-top: 4px; }
.time { display: flex; flex-direction: column; align-items: center; width: 86px; padding: 2px 0 0 6px; font: 12px/18px var(--caption); }
.peek { width: 13px; border: 1px solid #5c7693; background: #2a4767; }
</style>
